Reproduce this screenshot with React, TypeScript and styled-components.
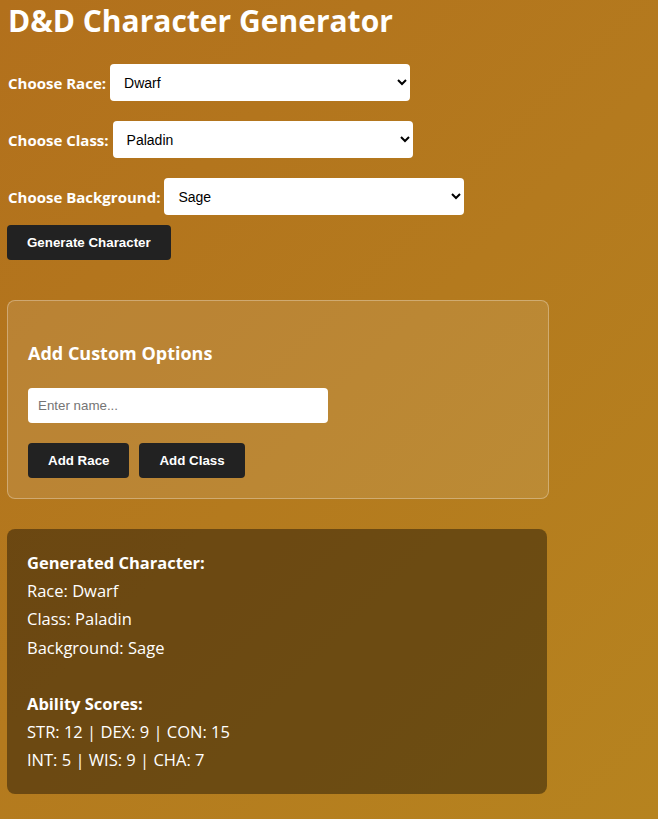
import styled, { createGlobalStyle } from "styled-components";

const GlobalStyle = createGlobalStyle`
	html, body {
		margin: 0;
		padding: 0;
		min-height: 100%;
	}
	body {
		min-height: 819px;
		background: linear-gradient(135deg, #b2701c 0%, #b47a1e 50%, #b6831f 100%);
		font-family: "Open Sans", "Noto Sans", sans-serif;
		color: #fff;
	}
`;

const Page = styled.div`
	padding: 0 8px 24px;
`;

const Title = styled.h1`
	margin: 0 0 26px;
	padding-top: 3px;
	font-size: 30px;
	line-height: 35px;
	font-weight: 700;
`;

const Row = styled.div`
	display: flex;
	align-items: center;
	gap: 4px;
	margin-bottom: 20px;
`;

const Label = styled.label`
	font-size: 15px;
	font-weight: 700;
`;

const Select = styled.select`
	width: 300px;
	height: 37px;
	padding: 0 10px;
	border: none;
	border-radius: 4px;
	background: #fff;
	font-family: Arial, "Liberation Sans", sans-serif;
	font-size: 14px;
	color: #000;
`;

const DarkButton = styled.button`
	height: 35px;
	padding: 0 20px;
	border: none;
	border-radius: 4px;
	background: #222;
	color: #fff;
	font-family: Arial, "Liberation Sans", sans-serif;
	font-size: 13.33px;
	font-weight: 700;
	cursor: pointer;
`;

const GenerateButton = styled(DarkButton)`
	margin-left: -1px;
`;

const CustomBox = styled.div`
	width: 500px;
	margin: 40px 0 30px -1px;
	padding: 20px;
	border: 1px solid rgba(255, 255, 255, 0.3);
	border-radius: 8px;
	background: rgba(255, 255, 255, 0.1);
`;

const CustomTitle = styled.h3`
	margin: 19px 0 22px;
	font-size: 18px;
	line-height: 26px;
	font-weight: 700;
`;

const NameInput = styled.input`
	display: block;
	box-sizing: border-box;
	width: 300px;
	height: 35px;
	padding: 0 10px;
	border: none;
	border-radius: 4px;
	font-family: Arial, "Liberation Sans", sans-serif;
	font-size: 13.33px;
	&::placeholder {
		color: #757575;
	}
`;

const ButtonRow = styled.div`
	display: flex;
	gap: 10px;
	margin-top: 20px;
`;

const ResultBox = styled.div`
	width: 500px;
	margin-left: -1px;
	padding: 20px;
	border-radius: 8px;
	background: rgba(0, 0, 0, 0.4);
	font-size: 16.5px;
	line-height: 28.2px;
`;

const ResultLine = styled.div<{ $bold?: boolean; $gapBefore?: boolean }>`
	font-weight: ${(p) => (p.$bold ? 700 : 400)};
	margin-top: ${(p) => (p.$gapBefore ? "28px" : "0")};
`;

export default function App() {
	const races = ["Human", "Elf", "Dwarf", "Halfling", "Gnome", "Orc", "Tiefling", "Dragonborn"];
	const classes = ["Fighter", "Wizard", "Rogue", "Cleric", "Paladin", "Ranger", "Bard", "Druid"];
	const backgrounds = ["Acolyte", "Criminal", "Folk Hero", "Noble", "Sage", "Soldier"];

	return (
		<Page>
			<GlobalStyle />
			<Title>D&amp;D Character Generator</Title>
			<Row>
				<Label>Choose Race:</Label>
				<Select defaultValue="Dwarf">
					{races.map((r) => (
						<option key={r}>{r}</option>
					))}
				</Select>
			</Row>
			<Row>
				<Label>Choose Class:</Label>
				<Select defaultValue="Paladin">
					{classes.map((c) => (
						<option key={c}>{c}</option>
					))}
				</Select>
			</Row>
			<Row style={{ marginBottom: 10 }}>
				<Label>Choose Background:</Label>
				<Select defaultValue="Sage">
					{backgrounds.map((b) => (
						<option key={b}>{b}</option>
					))}
				</Select>
			</Row>
			<GenerateButton>Generate Character</GenerateButton>

			<CustomBox>
				<CustomTitle>Add Custom Options</CustomTitle>
				<NameInput placeholder="Enter name..." />
				<ButtonRow>
					<DarkButton>Add Race</DarkButton>
					<DarkButton>Add Class</DarkButton>
				</ButtonRow>
			</CustomBox>

			<ResultBox>
				<ResultLine $bold>Generated Character:</ResultLine>
				<ResultLine>Race: Dwarf</ResultLine>
				<ResultLine>Class: Paladin</ResultLine>
				<ResultLine>Background: Sage</ResultLine>
				<ResultLine $bold $gapBefore>Ability Scores:</ResultLine>
				<ResultLine>STR: 12 | DEX: 9 | CON: 15</ResultLine>
				<ResultLine>INT: 5 | WIS: 9 | CHA: 7</ResultLine>
			</ResultBox>
		</Page>
	);
}
